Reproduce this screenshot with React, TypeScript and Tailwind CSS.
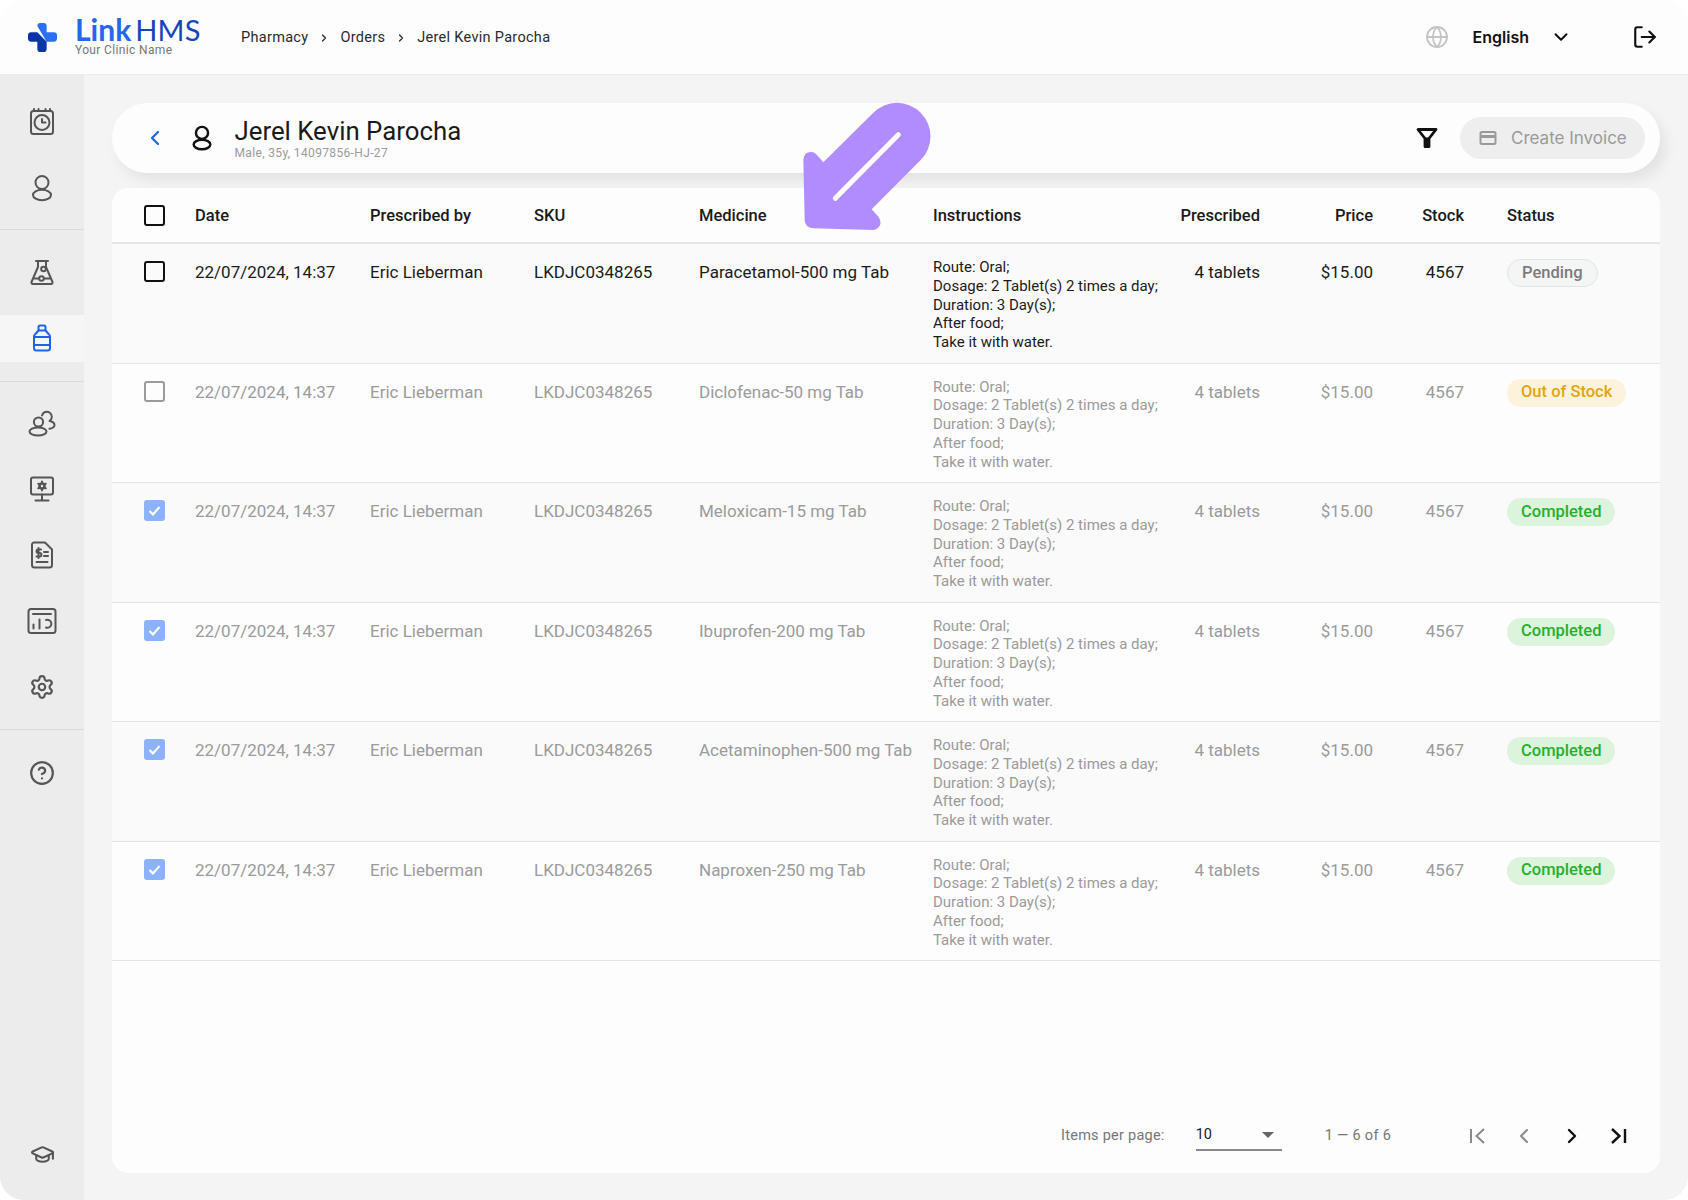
import { ChevronDown, ChevronLeft, ChevronRight, CircleHelp, Globe, GraduationCap, LogOut, Settings } from "lucide-react";

const stroke = { fill: "none", stroke: "currentColor", strokeWidth: 2, strokeLinecap: "round", strokeLinejoin: "round" } as const;

function ClockBook() {
  return (
    <svg width="28" height="28" viewBox="0 0 28 28" {...stroke}>
      <rect x="3" y="3" width="22" height="23" rx="2.5" />
      <path d="M6 1v2M10.500 1v2M17.500 1v2M22 1v2" />
      <circle cx="14" cy="14.500" r="7.500" />
      <path d="M14 11v3.500h3.500" />
    </svg>
  );
}

function UserIcon({ size = 28, weight = 2 }: { size?: number; weight?: number }) {
  return (
    <svg width={size} height={size} viewBox="0 0 28 28" {...stroke} strokeWidth={weight}>
      <circle cx="14" cy="8.500" r="6.500" />
      <ellipse cx="14" cy="21" rx="9" ry="5.200" />
    </svg>
  );
}

function Flask() {
  return (
    <svg width="28" height="28" viewBox="0 0 28 28" {...stroke}>
      <path d="M8 3h12M10 3v6L3.500 24a1.500 1.500 0 0 0 1.400 2h18.200a1.500 1.500 0 0 0 1.400-2L18 9V3" />
      <circle cx="15.500" cy="11" r="2.300" />
      <path d="M6.500 20.500h4.500M16 20.500h6" />
      <circle cx="13.500" cy="20.500" r="2.300" />
    </svg>
  );
}

function Bottle() {
  return (
    <svg width="28" height="28" viewBox="0 0 28 28" {...stroke}>
      <rect x="10.500" y="1.500" width="7" height="5" rx="1.500" />
      <path d="M10.500 6.500 7 10.500a2 2 0 0 0-1 2V24a2.500 2.500 0 0 0 2.500 2.500h11A2.500 2.500 0 0 0 22 24V12.500a2 2 0 0 0-1-2l-3.500-4" />
      <path d="M6 13h16M6 21h16" />
    </svg>
  );
}

function Users() {
  return (
    <svg width="28" height="28" viewBox="0 0 28 28" {...stroke}>
      <circle cx="10.500" cy="13" r="4.600" />
      <ellipse cx="10" cy="22.500" rx="8.500" ry="4" />
      <path d="M14 6.500a5 5 0 1 1 7.500 5.500c2.800.5 5 2 5 4 0 1.800-2 3.300-5 3.800" />
    </svg>
  );
}

function Monitor() {
  return (
    <svg width="28" height="28" viewBox="0 0 28 28" {...stroke}>
      <rect x="3" y="2.500" width="22" height="17" rx="2" />
      <path d="M14 19.500v6M7.500 25.500h13" />
      <circle cx="14" cy="11" r="2.500" strokeWidth="2.600" />
      <path d="M14 6.500v1M14 14.500v1M10.200 8.700l.9.5M16.900 12.800l.9.5M10.200 13.300l.9-.5M16.900 9.200l.9-.5" />
    </svg>
  );
}

function InvoiceDoc() {
  return (
    <svg width="28" height="28" viewBox="0 0 28 28" {...stroke}>
      <path d="M6 1.500h11l7 7V24a2.500 2.500 0 0 1-2.500 2.500h-15A2.500 2.500 0 0 1 4 24V3.500a2 2 0 0 1 2-2z" />
      <path d="M13 8.500H10.300a1.700 1.700 0 0 0 0 3.500h1.400a1.700 1.700 0 0 1 0 3.500H8.500M10.500 7v10M16 11h4M16 15h4M8.500 21h11" />
    </svg>
  );
}

function ChartCard() {
  return (
    <svg width="30" height="28" viewBox="0 0 30 28" {...stroke}>
      <rect x="1.500" y="2" width="27" height="24" rx="2.500" />
      <path d="M6 7h18M6.500 21.500v-4M12.500 21.500v-9" />
      <path d="M18 14a4 4 0 1 1 0 7.500" transform="translate(1 -1)" />
    </svg>
  );
}

function Funnel() {
  return (
    <svg width="22" height="22" viewBox="0 0 22 22" fill="none" stroke="#111" strokeWidth="2.800" strokeLinejoin="round">
      <path d="M2 2.500h18l-7 9v8h-4v-8z" />
      <path d="M9.500 12h3v7.500h-3z" fill="#111" />
    </svg>
  );
}

function Card() {
  return (
    <svg width="18" height="16" viewBox="0 0 18 16" fill="none" stroke="#9a9a9a" strokeWidth="2">
      <rect x="1.500" y="2" width="15" height="12" rx="1.500" />
      <path d="M1.500 6.500h15" strokeWidth="3" />
    </svg>
  );
}

function LogoCross() {
  return (
    <svg width="29" height="29" viewBox="0 0 28 28">
      <path d="M9 3a3 3 0 0 1 3-3h3a3 3 0 0 1 3 3v6h7a3 3 0 0 1 3 3v3a3 3 0 0 1-3 3h-7z" fill="#2a6fef" />
      <path d="M9 9H3a3 3 0 0 0-3 3v3a3 3 0 0 0 3 3h6v7a3 3 0 0 0 3 3h3a3 3 0 0 0 3-3v-7z" fill="#0a34a8" />
    </svg>
  );
}

function PurpleArrow() {
  return (
    <svg className="absolute left-[760px] top-[80px]" width="200" height="170" viewBox="0 0 600 510">
      <path
        d="M190 247 L340 98 A100 100 0 0 1 482 240 L335 388 L356 411 Q372 438 342 450 L160 445 Q135 443 134 420 L130 238 Q134 212 160 217 Q168 220 190 247 Z"
        fill="#b18cff"
      />
      <path d="M226 355 L415 164" stroke="#fff" strokeWidth="15" strokeLinecap="round" />
    </svg>
  );
}

function SideIcon({ children, active }: { children: React.ReactNode; active?: boolean }) {
  return (
    <div className={`my-[9.5px] flex h-[47px] items-center justify-center ${active ? "bg-[#f6f6f6] text-[#1d63ed]" : "text-[#555555]"}`}>
      {children}
    </div>
  );
}

function Checkbox({ state }: { state: "on" | "off" | "muted" | "checked" }) {
  if (state === "checked") {
    return (
      <div className="flex h-[21px] w-[21px] items-center justify-center rounded-[3px] bg-[#8cb2fb]">
        <svg width="15" height="15" viewBox="0 0 15 15" fill="none" stroke="#fff" strokeWidth="2.200">
          <path d="M2.500 8 6 11.500 12.500 4" />
        </svg>
      </div>
    );
  }
  return <div className={`h-[21px] w-[21px] rounded-[3px] border-[2.5px] ${state === "on" ? "border-[#111111]" : "border-[#9b9b9b]"}`} />;
}

function Badge({ status }: { status: string }) {
  const cls =
    status === "Pending"
      ? "border border-[#e2e3e3] bg-[#f4f5f5] text-[#7b7b7b]"
      : status === "Out of Stock"
        ? "bg-[#fdf3dc] text-[#e5a413]"
        : "bg-[#dcf3dc] text-[#24b02c]";
  return (
    <span className={`flex h-[28px] w-fit items-center whitespace-nowrap rounded-full px-[14px] text-[16.500px] font-medium leading-none ${cls}`}>
      {status}
    </span>
  );
}

const cols = "grid grid-cols-[83px_175px_164px_165px_234px_233px_94px_113px_91px_1fr]";

const rows = [
  { med: "Paracetamol-500 mg Tab", status: "Pending", box: "on" },
  { med: "Diclofenac-50 mg Tab", status: "Out of Stock", box: "muted" },
  { med: "Meloxicam-15 mg Tab", status: "Completed", box: "checked" },
  { med: "Ibuprofen-200 mg Tab", status: "Completed", box: "checked" },
  { med: "Acetaminophen-500 mg Tab", status: "Completed", box: "checked" },
  { med: "Naproxen-250 mg Tab", status: "Completed", box: "checked" },
] as const;

export default function App() {
  return (
    <div className="relative h-[1200px] w-[1688px] bg-white font-['Roboto',sans-serif]">
      <div className="flex h-full flex-col overflow-hidden rounded-[24px] bg-[#f4f4f4]">
        <header className="flex h-[75px] shrink-0 items-center border-b border-[#ececec] bg-[#fdfdfe] pl-[28px] pr-[30px]">
          <LogoCross />
          <div className="ml-[18px] flex w-[166px] flex-col">
            <div className="flex items-baseline font-['Lato',sans-serif] leading-none">
              <span className="text-[30px] font-bold leading-[24px] text-[#2368e8]">Link</span>
              <span className="ml-[4px] text-[29px] font-normal leading-[24px] tracking-[0.2px] text-[#1546b8]">HMS</span>
            </div>
            <span className="mt-[2px] text-[12px] leading-[13px] tracking-[0.35px] text-[#777777]">Your Clinic Name</span>
          </div>
          <nav className="flex translate-y-[1px] items-center text-[14.500px] tracking-[0.3px] text-[#2a2a2a]">
            <span>Pharmacy</span>
            <ChevronRight size={12} strokeWidth={2.500} className="mx-[10px]" />
            <span>Orders</span>
            <ChevronRight size={12} strokeWidth={2.500} className="mx-[10px]" />
            <span>Jerel Kevin Parocha</span>
          </nav>
          <Globe size={24} strokeWidth={1.800} className="ml-auto text-[#c4c4c4]" />
          <span className="ml-[24px] font-['Inter',sans-serif] text-[16px] font-semibold text-[#111111]">English</span>
          <ChevronDown size={22} strokeWidth={2.200} className="ml-[21px] text-[#111111]" />
          <LogOut size={26} strokeWidth={2} className="ml-[60px] text-[#111111]" />
        </header>

        <div className="flex min-h-0 flex-1">
          <aside className="flex w-[84px] shrink-0 flex-col bg-[#ececec]">
            <div className="flex flex-col border-b border-[#d9d9d9] pb-[8px] pt-[14px]">
              <SideIcon><ClockBook /></SideIcon>
              <SideIcon><UserIcon /></SideIcon>
            </div>
            <div className="flex flex-col border-b border-[#d9d9d9] pb-[10px] pt-[9px]">
              <SideIcon><Flask /></SideIcon>
              <SideIcon active><Bottle /></SideIcon>
            </div>
            <div className="flex flex-col border-b border-[#d9d9d9] pb-[9px] pt-[8px]">
              <SideIcon><Users /></SideIcon>
              <SideIcon><Monitor /></SideIcon>
              <SideIcon><InvoiceDoc /></SideIcon>
              <SideIcon><ChartCard /></SideIcon>
              <SideIcon><Settings size={26} strokeWidth={2} /></SideIcon>
            </div>
            <div className="flex flex-1 flex-col pb-[13px] pt-[10px]">
              <SideIcon><CircleHelp size={26} strokeWidth={2} /></SideIcon>
              <div className="mt-auto flex flex-col">
                <SideIcon><GraduationCap size={25} strokeWidth={2} /></SideIcon>
              </div>
            </div>
          </aside>

          <main className="flex min-w-0 flex-1 flex-col pb-[27px] pl-[28px] pr-[28px] pt-[28px]">
            <div className="flex h-[70px] shrink-0 items-center rounded-[35px] bg-[#fdfdfe] pl-[31px] pr-[15px] shadow-[6px_8px_14px_rgba(0,0,0,0.07)]">
              <ChevronLeft size={24} strokeWidth={2.200} className="text-[#1d63ed]" />
              <div className="ml-[21.500px] text-[#111111]"><UserIcon size={26} weight={2.600} /></div>
              <div className="ml-[20px] flex flex-col">
                <span className="text-[25.800px] leading-[28px] text-[#1a1a1a]">Jerel Kevin Parocha</span>
                <span className="mt-[1px] text-[12px] leading-[14px] tracking-[0.35px] text-[#9b9b9b]">Male, 35y, 14097856-HJ-27</span>
              </div>
              <div className="ml-auto"><Funnel /></div>
              <button className="ml-[22px] flex h-[42px] w-[185px] items-center rounded-full bg-[#eeeeee] pl-[19px] font-['Inter',sans-serif] text-[17px] text-[#9a9a9a]">
                <Card />
                <span className="ml-[14px] translate-y-[1px]">Create Invoice</span>
              </button>
            </div>

            <div className="mt-[15px] flex min-h-0 flex-1 flex-col overflow-hidden rounded-[16px] bg-[#fdfdfe]">
              <div className={`${cols} h-[56px] shrink-0 items-center border-b-2 border-[#e6e6e6] text-[16.500px] font-medium text-[#1a1a1a]`}>
                <div className="pl-[32px]"><Checkbox state="on" /></div>
                <div className="translate-y-[1px]">Date</div>
                <div className="translate-y-[1px]">Prescribed by</div>
                <div className="translate-y-[1px]">SKU</div>
                <div className="translate-y-[1px]">Medicine</div>
                <div className="translate-y-[1px]">Instructions</div>
                <div className="translate-y-[1px] text-right">Prescribed</div>
                <div className="translate-y-[1px] text-right">Price</div>
                <div className="translate-y-[1px] text-right">Stock</div>
                <div className="translate-y-[1px] pl-[43px]">Status</div>
              </div>

              {rows.map((row, i) => (
                <div
                  key={row.med}
                  className={`${cols} h-[119.500px] shrink-0 border-b border-[#e4e4e4] text-[17px] ${i % 2 === 0 ? "bg-[#fafafa]" : "bg-[#fdfdfe]"} ${i === 0 ? "text-[#1a1a1a]" : "text-[#9b9b9b]"}`}
                >
                  <div className="pl-[32px] pt-[17px]"><Checkbox state={row.box} /></div>
                  <div className="pt-[16px] leading-[24px]">22/07/2024, 14:37</div>
                  <div className="pt-[16px] leading-[24px]">Eric Lieberman</div>
                  <div className="pt-[16px] leading-[24px]">LKDJC0348265</div>
                  <div className="pt-[16px] leading-[24px]">{row.med}</div>
                  <div className="pt-[14px] text-[15px] leading-[18.750px]">
                    <div>Route: Oral;</div>
                    <div>Dosage: 2 Tablet(s) 2 times a day;</div>
                    <div>Duration: 3 Day(s);</div>
                    <div>After food;</div>
                    <div>Take it with water.</div>
                  </div>
                  <div className="whitespace-nowrap pt-[16px] text-right leading-[24px]">4 tablets</div>
                  <div className="pt-[16px] text-right leading-[24px]">$15.00</div>
                  <div className="pt-[16px] text-right leading-[24px]">4567</div>
                  <div className="pl-[43px] pt-[15px]"><Badge status={row.status} /></div>
                </div>
              ))}

              <div className="mt-auto flex h-[76px] shrink-0 items-start pt-[18px] text-[14.500px] text-[#777777]">
                <span className="ml-[949px] mt-[11px] leading-[20px] tracking-[0.25px]">Items per page:</span>
                <div className="ml-[31px] flex h-[36px] w-[86px] items-center justify-between border-b-2 border-[#8a8a8a] pr-[8px] pt-[5px] text-[#1a1a1a]">
                  <span>10</span>
                  <span className="h-0 w-0 border-x-[6px] border-t-[6px] border-x-transparent border-t-[#666666]" />
                </div>
                <span className="ml-[43px] mt-[11px] leading-[20px] tracking-[0.3px]">1 — 6 of 6</span>
                <div className="ml-[78px] flex items-center pt-[9px]">
                  <svg width="20" height="20" viewBox="0 0 20 20" fill="none" stroke="#8a8a8a" strokeWidth="2"><path d="M2 3v14M15 3 7.500 10l7.500 7" /></svg>
                  <ChevronLeft size={24} strokeWidth={2} className="ml-[23px] text-[#8a8a8a]" />
                  <ChevronRight size={24} strokeWidth={2.400} className="ml-[24px] text-[#111111]" />
                  <svg className="ml-[23px]" width="20" height="20" viewBox="0 0 20 20" fill="none" stroke="#111" strokeWidth="2.400"><path d="M18 3v14M5 3l7.500 7L5 17" /></svg>
                </div>
              </div>
            </div>
          </main>
        </div>
      </div>
      <PurpleArrow />
    </div>
  );
}
